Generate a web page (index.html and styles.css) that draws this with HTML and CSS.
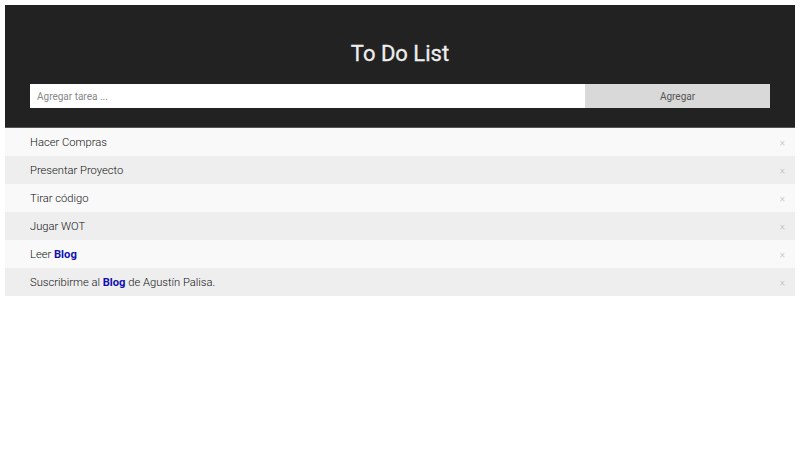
FILE: index.html
```html
<!DOCTYPE html>
<html lang="es">
<head>
<meta charset="utf-8">
<title>To Do List</title>
<link rel="stylesheet" href="styles.css">
</head>
<body>
<div class="header">
  <h2 class="title">To Do List</h2>
  <div class="form">
    <input class="task-input" type="text" placeholder="Agregar tarea ...">
    <span class="add-btn">Agregar</span>
  </div>
</div>
<ul class="list">
  <li class="item"><span>Hacer Compras</span><span class="close">×</span></li>
  <li class="item"><span>Presentar Proyecto</span><span class="close">×</span></li>
  <li class="item"><span>Tirar código</span><span class="close">×</span></li>
  <li class="item"><span>Jugar WOT</span><span class="close">×</span></li>
  <li class="item"><span>Leer <b class="link">Blog</b></span><span class="close">×</span></li>
  <li class="item"><span>Suscribirme al <b class="link">Blog</b> de Agustín Palisa.</span><span class="close">×</span></li>
</ul>
</body>
</html>
```
FILE: styles.css
```css
* { box-sizing: border-box; }
body {
  margin: 5px;
  font-family: Roboto, "Liberation Sans", sans-serif;
  background: #fff;
}
.header {
  background: #222;
  padding: 35px 25px 19px;
  border-bottom: 1px solid #555;
}
.title {
  margin: 0 0 16px;
  color: #eee;
  font-size: 22px;
  font-weight: 400;
  line-height: 28px;
  text-align: center;
  -webkit-text-stroke: 0.3px #eee;
}
.form {
  display: flex;
  height: 24px;
}
.task-input {
  flex: 1;
  border: none;
  margin: 0;
  padding: 0 7px;
  font-family: Roboto, "Liberation Sans", sans-serif;
  font-size: 10px;
  font-weight: 400;
  background: #fff;
  outline: none;
}
.task-input::placeholder { color: #888; }
.add-btn {
  width: 185px;
  background: #d9d9d9;
  color: #555;
  font-size: 10px;
  display: flex;
  align-items: center;
  justify-content: center;
}
.list {
  list-style: none;
  margin: 0;
  padding: 0;
}
.item {
  display: flex;
  justify-content: space-between;
  align-items: center;
  height: 28px;
  padding: 0 10px 0 25px;
  font-size: 11.2px;
  font-weight: 300;
  color: #111;
  background: #f9f9f9;
}
.item:nth-child(even) { background: #eee; }
.link { color: #1010b0; font-weight: 700; }
.close {
  color: #bbb;
  font-size: 10px;
}
```
